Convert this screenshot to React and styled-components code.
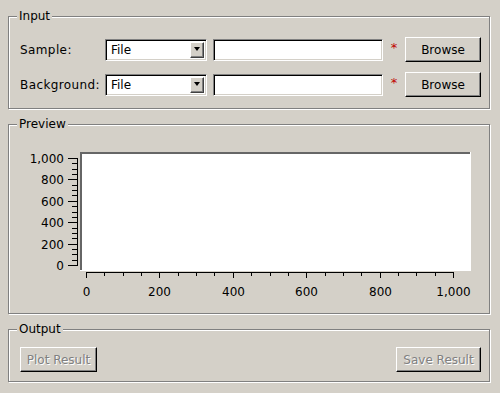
import React from 'react';
import styled, { createGlobalStyle } from 'styled-components';

const GlobalStyle = createGlobalStyle`
  html, body {
    margin: 0;
    padding: 0;
    background: #d4d0c8;
  }
  body {
    font-family: "DejaVu Sans", "Liberation Sans", sans-serif;
    font-size: 12px;
    color: #000;
  }
`;

const Window = styled.div`
  width: 500px;
  height: 393px;
  box-sizing: border-box;
  padding: 9px 10px 0 8px;
  display: flex;
  flex-direction: column;
  gap: 8px;
  background: #d4d0c8;
  overflow: hidden;
`;

const Group = styled.fieldset`
  margin: 0;
  min-width: 0;
  border: 1px solid #808080;
  box-shadow: inset 1px 1px 0 #fff, 1px 1px 0 #fff;
  padding: ${p => p.$pad || '0 0 0 8px'};
`;

const Legend = styled.legend`
  margin-left: 0;
  padding: 0 2px;
  line-height: 14px;
  background: #d4d0c8;
`;

const Row = styled.div`
  display: flex;
  align-items: center;
  height: 25px;
  padding-left: 3px;
  & + & {
    margin-top: 10px;
  }
`;

const Label = styled.span`
  width: 85px;
  flex: none;
  white-space: nowrap;
  letter-spacing: 0.4px;
`;

const sunken = `
  box-sizing: border-box;
  background: #fff;
  border: 1px solid;
  border-color: #808080 #fff #fff #808080;
  box-shadow: inset 1px 1px 0 #000, inset -1px -1px 0 #d4d0c8;
`;

const Combo = styled.div`
  ${sunken}
  width: 102px;
  height: 22px;
  display: flex;
  align-items: center;
  padding: 2px 2px 2px 5px;
`;

const ComboText = styled.span`
  flex: 1;
  line-height: 14px;
`;

const ArrowButton = styled.span`
  box-sizing: border-box;
  width: 14px;
  height: 16px;
  background: #d4d0c8;
  border: 1px solid;
  border-color: #fff #404040 #404040 #fff;
  box-shadow: inset -1px -1px 0 #808080;
  display: flex;
  align-items: center;
  justify-content: center;
  &::after {
    content: '';
    border-left: 3px solid transparent;
    border-right: 3px solid transparent;
    border-top: 4px solid #000;
    margin-bottom: 1px;
  }
`;

const TextField = styled.div`
  ${sunken}
  width: 170px;
  height: 22px;
  margin-left: 6px;
`;

const Required = styled.span`
  width: 22px;
  text-align: center;
  color: #c00000;
  font-size: 13px;
  line-height: 14px;
  margin-top: -4px;
`;

const Button = styled.button`
  box-sizing: border-box;
  width: ${p => p.$w}px;
  height: 25px;
  margin: 0;
  padding: 0;
  font: inherit;
  background: #d4d0c8;
  border: 1px solid;
  border-color: #fff #000 #000 #fff;
  box-shadow: inset -1px -1px 0 #808080;
  color: ${p => (p.disabled ? '#808080' : '#000')};
  text-shadow: ${p => (p.disabled ? '1px 1px 0 #fff' : 'none')};
`;

const OutputRow = styled.div`
  display: flex;
  justify-content: space-between;
  padding-left: 3px;
`;

const Chart = styled.svg`
  display: block;
  font-family: "DejaVu Sans", sans-serif;
  font-size: 12px;
`;

const yTicks = [0, 200, 400, 600, 800, 1000];
const fmt = v => (v === 1000 ? '1,000' : String(v));

// chart coordinates are relative to the svg, which starts 8px inside the group
function PreviewChart() {
  const y0 = 134;
  const yStep = 21.4;
  const x0 = 69;
  const xStep = 73.4;
  const ax = 60.5;
  const yMinor = [];
  const xMinor = [];
  for (let i = 0; i < 5; i++) {
    for (let j = 1; j < 4; j++) {
      yMinor.push(Math.round(y0 - (i + j / 4) * yStep));
      xMinor.push(Math.round(x0 + (i + j / 4) * xStep));
    }
  }
  return (
    <Chart width="471" height="182">
      <rect x="63" y="21" width="391" height="119" fill="#fff" />
      <rect x="63" y="21" width="390" height="2" fill="#666" />
      <rect x="63" y="21" width="2" height="118" fill="#666" />
      <g stroke="#000" shapeRendering="crispEdges">
        <line x1={ax} y1="27" x2={ax} y2="135" />
        {yTicks.map((v, i) => {
          const y = Math.round(y0 - i * yStep) + 0.5;
          return <line key={v} x1="51" y1={y} x2="60" y2={y} />;
        })}
        {yMinor.map(y => (
          <line key={'y' + y} x1="55" y1={y + 0.5} x2="60" y2={y + 0.5} />
        ))}
        <line x1="69" y1="141.5" x2="437" y2="141.5" />
        {yTicks.map((v, i) => {
          const x = Math.round(x0 + i * xStep) + 0.5;
          return <line key={v} x1={x} y1="141" x2={x} y2="147" />;
        })}
        {xMinor.map(x => (
          <line key={'x' + x} x1={x + 0.5} y1="141" x2={x + 0.5} y2="145" />
        ))}
      </g>
      <g fill="#000">
        {yTicks.map((v, i) => (
          <text key={v} x="47" y={Math.round(y0 - i * yStep) + 5} textAnchor="end">
            {fmt(v)}
          </text>
        ))}
        {yTicks.map((v, i) => (
          <text key={v} x={Math.round(x0 + i * xStep) + 0.5} y="165" textAnchor="middle">
            {fmt(v)}
          </text>
        ))}
      </g>
    </Chart>
  );
}

function FileRow({ label }) {
  return (
    <Row>
      <Label>{label}</Label>
      <Combo>
        <ComboText>File</ComboText>
        <ArrowButton />
      </Combo>
      <TextField />
      <Required>*</Required>
      <Button $w={76}>Browse</Button>
    </Row>
  );
}

export default function App() {
  return (
    <>
      <GlobalStyle />
      <Window>
        <Group $pad="14px 8px 11px 8px">
          <Legend>Input</Legend>
          <FileRow label="Sample:" />
          <FileRow label="Background:" />
        </Group>
        <Group>
          <Legend>Preview</Legend>
          <PreviewChart />
        </Group>
        <Group $pad="11px 8px 9px 8px">
          <Legend>Output</Legend>
          <OutputRow>
            <Button $w={77} disabled>Plot Result</Button>
            <Button $w={85} disabled>Save Result</Button>
          </OutputRow>
        </Group>
      </Window>
    </>
  );
}
